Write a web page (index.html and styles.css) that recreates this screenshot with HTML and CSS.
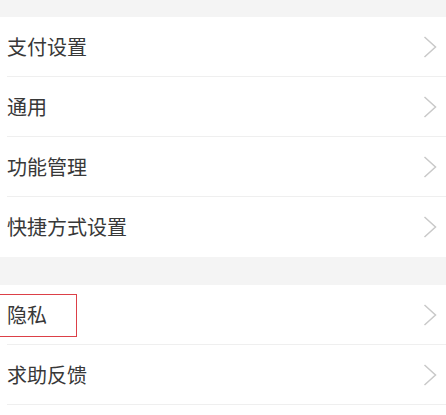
FILE: index.html
```html
<!DOCTYPE html>
<html lang="zh">
<head>
<meta charset="utf-8">
<link rel="stylesheet" href="styles.css">
</head>
<body>
<div class="page">
  <div class="band band-top"></div>
  <div class="group">
    <div class="row"><span class="label">支付设置</span><svg class="chev" viewBox="0 0 14 22" width="14" height="22"><polyline points="1.5,1 12.5,11 1.5,21"/></svg></div>
    <div class="row"><span class="label">通用</span><svg class="chev" viewBox="0 0 14 22" width="14" height="22"><polyline points="1.5,1 12.5,11 1.5,21"/></svg></div>
    <div class="row"><span class="label">功能管理</span><svg class="chev" viewBox="0 0 14 22" width="14" height="22"><polyline points="1.5,1 12.5,11 1.5,21"/></svg></div>
    <div class="row last"><span class="label">快捷方式设置</span><svg class="chev" viewBox="0 0 14 22" width="14" height="22"><polyline points="1.5,1 12.5,11 1.5,21"/></svg></div>
  </div>
  <div class="band band-mid"></div>
  <div class="group">
    <div class="row"><span class="label">隐私</span><span class="mark"></span><svg class="chev" viewBox="0 0 14 22" width="14" height="22"><polyline points="1.5,1 12.5,11 1.5,21"/></svg></div>
    <div class="row"><span class="label">求助反馈</span><svg class="chev" viewBox="0 0 14 22" width="14" height="22"><polyline points="1.5,1 12.5,11 1.5,21"/></svg></div>
  </div>
</div>
</body>
</html>
```
FILE: styles.css
```css
html, body {
  margin: 0;
  padding: 0;
  background: #ffffff;
}
.page {
  width: 446px;
  height: 415px;
  overflow: hidden;
  font-family: "Noto Sans CJK SC", "Noto Sans", sans-serif;
  background: #ffffff;
}
.band {
  background: #f4f4f4;
}
.band-top {
  height: 17px;
}
.band-mid {
  height: 28px;
}
.group {
  background: #ffffff;
}
.row {
  position: relative;
  height: 59px;
  display: flex;
  align-items: center;
  justify-content: space-between;
  margin-left: 7px;
  padding-right: 9px;
  border-bottom: 1px solid #efefef;
}
.row.last {
  border-bottom: none;
  height: 60px;
}
.label {
  font-size: 20px;
  color: #383838;
  line-height: 1;
}
.chev {
  display: block;
  fill: none;
  stroke: #c9c9c9;
  stroke-width: 1.5;
}
.mark {
  position: absolute;
  left: -9px;
  top: 9px;
  width: 77px;
  height: 41px;
  border: 1px solid #dc4048;
}
```
